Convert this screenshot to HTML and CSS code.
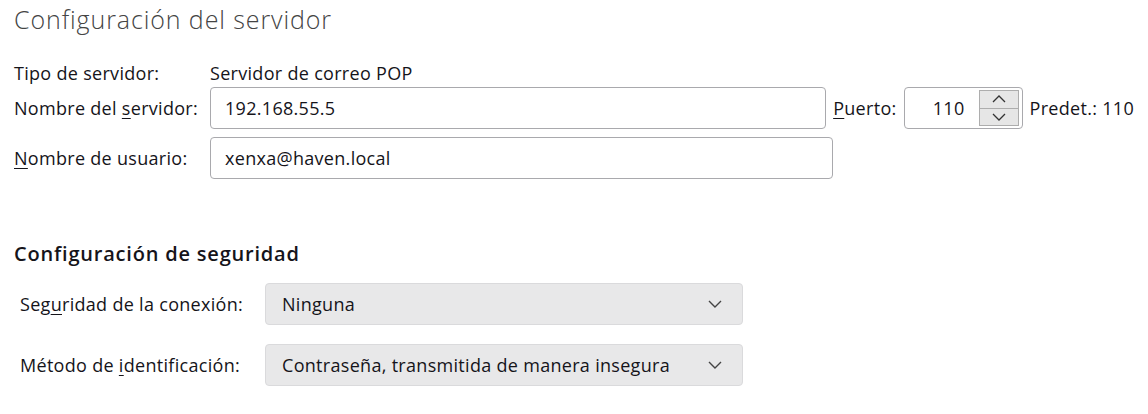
FILE: index.html
```html
<!DOCTYPE html>
<html lang="es">
<head>
<meta charset="utf-8">
<title>Configuración del servidor</title>
<link rel="stylesheet" href="styles.css">
</head>
<body>
<div class="page">
  <h1 class="title">Configuración del servidor</h1>
  <div class="server">
    <div class="row row-type">
      <span class="label">Tipo de servidor:</span>
      <span class="value">Servidor de correo POP</span>
    </div>
    <div class="row">
      <span class="label">Nombre del <u>s</u>ervidor:</span>
      <div class="field wide">192.168.55.5</div>
      <span class="port-label"><u>P</u>uerto:</span>
      <div class="field port">
        <span class="port-value">110</span>
        <div class="spinner">
          <div class="spin">
            <svg width="14" height="8" viewBox="0 0 14 8"><path d="M1 7 L7 1 L13 7" fill="none" stroke="#333" stroke-width="1.3"/></svg>
          </div>
          <div class="spin">
            <svg width="14" height="8" viewBox="0 0 14 8"><path d="M1 1 L7 7 L13 1" fill="none" stroke="#333" stroke-width="1.3"/></svg>
          </div>
        </div>
      </div>
      <span class="default">Predet.: 110</span>
    </div>
    <div class="row">
      <span class="label"><u>N</u>ombre de usuario:</span>
      <div class="field wide">xenxa@haven.local</div>
    </div>
  </div>

  <h2 class="section">Configuración de seguridad</h2>
  <div class="security">
    <div class="srow">
      <span class="slabel">Seg<u>u</u>ridad de la conexión:</span>
      <div class="select">
        <span>Ninguna</span>
        <svg class="chev" width="14" height="8" viewBox="0 0 14 8"><path d="M1 1 L7 7 L13 1" fill="none" stroke="#444" stroke-width="1.4"/></svg>
      </div>
    </div>
    <div class="srow">
      <span class="slabel">Método de <u>i</u>dentificación:</span>
      <div class="select">
        <span>Contraseña, transmitida de manera insegura</span>
        <svg class="chev" width="14" height="8" viewBox="0 0 14 8"><path d="M1 1 L7 7 L13 1" fill="none" stroke="#444" stroke-width="1.4"/></svg>
      </div>
    </div>
  </div>
</div>
</body>
</html>
```

FILE: styles.css
```css
* { box-sizing: border-box; }
html, body { margin: 0; padding: 0; background: #fff; }
body {
  font-family: "Open Sans", "Noto Sans", sans-serif;
  font-size: 18px;
  letter-spacing: 0.3px;
  color: #15141a;
}
u { text-decoration-thickness: 1px; text-underline-offset: 3px; }
.page { padding: 2px 14px 0 14px; }
.title {
  margin: 0;
  font-size: 25px;
  font-weight: 300;
  letter-spacing: 0.9px;
  line-height: 34px;
  color: #444;
}
.server { margin-top: 22px; display: flex; flex-direction: column; gap: 8px; }
.row { display: flex; align-items: center; height: 42px; }
.row-type { height: 29px; margin-bottom: -8px; }
.label { width: 196px; flex: none; white-space: nowrap; }
.field {
  height: 42px;
  border: 1px solid #a9a9ad;
  border-radius: 4px;
  display: flex;
  align-items: center;
  background: #fff;
}
.wide { width: 623px; padding-left: 14px; }
.port-label { margin-left: 7px; margin-right: 7px; flex: none; }
.port { width: 119px; flex: none; justify-content: flex-end; padding-right: 3px; }
.port-value { margin-right: 14px; }
.spinner {
  width: 40px;
  height: 36px;
  display: flex;
  flex-direction: column;
  border: 1px solid #adadad;
  background: #e6e6e6;
}
.spin { flex: 1; display: flex; align-items: center; justify-content: center; }
.spin + .spin { border-top: 1px solid #adadad; }
.default { margin-left: 7px; white-space: nowrap; }

.section {
  margin: 61px 0 0 0;
  font-size: 20px;
  font-weight: 600;
  letter-spacing: 0.8px;
  line-height: 28px;
}
.security { margin-top: 15px; padding-left: 6px; display: flex; flex-direction: column; gap: 19px; }
.srow { display: flex; align-items: center; }
.slabel { width: 245px; flex: none; white-space: nowrap; }
.select {
  width: 478px;
  height: 42px;
  background: #e8e8e9;
  border: 1px solid #dadadc;
  border-radius: 4px;
  display: flex;
  align-items: center;
  justify-content: space-between;
  padding: 0 20px 0 16px;
}
.chev { flex: none; }
```
